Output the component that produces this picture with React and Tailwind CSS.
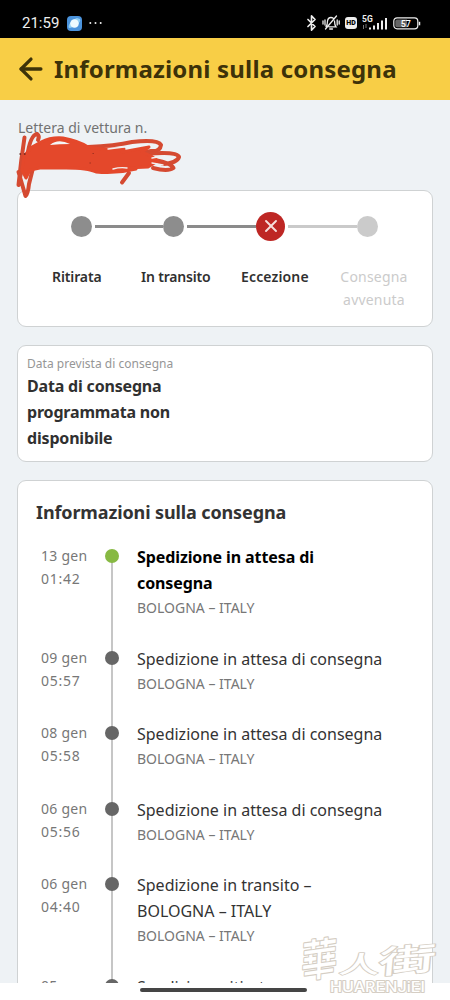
import { ArrowLeft, Bluetooth, X } from "lucide-react";

const events = [
    { date: "13 gen", time: "01:42", title: ["Spedizione in attesa di", "consegna"], place: "BOLOGNA – ITALY", current: true },
    { date: "09 gen", time: "05:57", title: ["Spedizione in attesa di consegna"], place: "BOLOGNA – ITALY" },
    { date: "08 gen", time: "05:58", title: ["Spedizione in attesa di consegna"], place: "BOLOGNA – ITALY" },
    { date: "06 gen", time: "05:56", title: ["Spedizione in attesa di consegna"], place: "BOLOGNA – ITALY" },
    { date: "06 gen", time: "04:40", title: ["Spedizione in transito –", "BOLOGNA – ITALY"], place: "BOLOGNA – ITALY" },
    { date: "05 gen", title: ["Spedizione ritirata"] },
];

function StatusBar() {
    return (
        <div className="flex h-[38px] shrink-0 items-center bg-black pt-[8px] pl-[22px] pr-[29px] text-[#eeeeee]">
            <span className="w-[38px] font-['Roboto',sans-serif] text-[15px] leading-none">21:59</span>
            <svg className="ml-[7px] size-[15px]" viewBox="0 0 15 15">
                <rect width="15" height="15" rx="4" fill="#4b93dc" />
                <path d="M2 12 C0 10 5 3 10 2 L13 3 C15 6 7 12 2 12Z" fill="#91cff5" />
                <circle cx="7.5" cy="7.5" r="4.3" fill="#eefaff" />
            </svg>
            <svg className="ml-[7px] h-[4px] w-[13px]" viewBox="0 0 13 4" fill="#eee">
                <circle cx="1.3" cy="2" r="1" />
                <circle cx="6.5" cy="2" r="1" />
                <circle cx="11.7" cy="2" r="1" />
            </svg>
            <div className="ml-auto flex items-center">
                <Bluetooth className="h-[18px] w-[17px]" strokeWidth={2.3} />
                <svg className="ml-[2px] h-[16px] w-[18px]" viewBox="0 0 18 16" fill="none" stroke="#eee" strokeWidth="1.3" strokeLinecap="round">
                    <path d="M4 11.5 Q5.5 10 5.5 6 Q6 2.5 9 2.5 Q10.3 2.5 11.3 3.3 M12.5 6 Q12.5 10 14 11.8 H7 M7.7 14 H10.5 M14.5 1 L3.5 14 M1 6 V9 M3 5 V10 M15.2 5 V10 M17.2 6 V9" />
                </svg>
                <span className="ml-[5px] flex h-[12px] w-[12px] items-center justify-center rounded-[3px] bg-[#eeeeee] font-['Roboto',sans-serif] text-[7px] font-black leading-none text-black">HD</span>
                <svg className="ml-[5px] h-[16px] w-[26px]" viewBox="0 0 26 16" fill="#eee">
                    <text x="0" y="7" fontSize="8.5" fontFamily="Roboto, sans-serif" fontWeight="700">5G</text>
                    <path d="M1.5 10 V14 M4 9 V13" stroke="#777" strokeWidth="1" />
                    <path d="M7 12.5h2v2H7z M11 10.5h2v4h-2z M15 8h2v6.5h-2z M19 5.5h2v9h-2z M23 3h2v11.5h-2z" />
                </svg>
                <svg className="ml-[5px] h-[13px] w-[28px]" viewBox="0 0 28 13">
                    <rect x=".8" y=".8" width="24" height="11" rx="3.3" fill="none" stroke="#eee" strokeWidth="1.2" />
                    <path d="M4 2.5h10v7.8H4q-1.7 0-1.7-2V4.5q0-2 1.7-2" fill="#666" />
                    <path d="M26.5 4.8v3.5" stroke="#eee" strokeWidth="1.5" />
                    <text x="12.8" y="9.7" textAnchor="middle" fill="#fff" fontSize="9" fontFamily="Roboto, sans-serif" fontWeight="500">57</text>
                </svg>
            </div>
        </div>
    );
}

// marker strokes covering the waybill number
function Scribble() {
    return (
        <svg className="absolute left-[14px] top-[129px] h-[72px] w-[172px]" viewBox="14 129 172 72" fill="none" stroke="#d54a31" strokeWidth="4" strokeLinecap="round" strokeLinejoin="round">
            <path d="M24.5 137.5 Q21 160 18.5 185 L22 168 M18.5 172 L25.5 196 Q28 194 29 184 L35 160" />
            <path d="M27 158 Q30 135 37 134 Q40 136 38 140" />
            <path d="M88 147 Q115 146 132 142 Q158 139 161 145 Q160 152 151 151 Q140 153 126 156" />
            <path d="M145 154 Q177 151 179 157 Q177 163 163 164 L150 158 M148 159 Q170 162 173.5 168 Q168 172 153 168 M129 173 L122 182.5" />
            <path d="M24 156 L32 147 L41 142 Q51 137 63 138 Q79 141 88 147 L102 149 L124 149 L122 152 L149 147 L142 152 L151 156 L158 161 L148 167 L126 168 L114 169 L136 169 Q116 174 96 172 Q88 168 66 168 L40 168 L30 170 L26 178 L22 170 Z" fill="#e4482b" stroke="#e4482b" strokeWidth="3" />
            <path d="M50 145 Q58 138 70 144 Q59 144 50 145Z" fill="#f4f5f6" stroke="none" />
            <path d="M113 169 Q120 167 127 168 M152 158 L163 156 M152 163 L163 165 M108 149 L124 147" stroke="#f3eeee" strokeWidth="1.4" />
            <path d="M20 154h.5 M24.5 154h.5" stroke="#5b2019" strokeWidth="1.4" />
            <path d="M93 153.5h.3 M90 163h.3" stroke="#8a2a1c" strokeWidth="1" />
        </svg>
    );
}

function Progress() {
    return (
        <section className="h-[137px] shrink-0 rounded-[9px] border border-[#cfd2d3] bg-white">
            <div className="flex h-[70px] items-center pl-[53px]">
                <span className="size-[21px] rounded-full bg-[#8d8d8d]" />
                <span className="ml-[3px] h-[3px] w-[68px] bg-[#8b8b8b]" />
                <span className="size-[21px] rounded-full bg-[#8d8d8d]" />
                <span className="ml-[3px] h-[3px] w-[69px] bg-[#8b8b8b]" />
                <span className="flex size-[29px] items-center justify-center rounded-full bg-[#be2724]">
                    <X className="size-[20px] text-[#f6dedc]" strokeWidth={2.3} />
                </span>
                <span className="ml-[3px] h-[3px] w-[69px] bg-[#cacaca]" />
                <span className="size-[21px] rounded-full bg-[#cbcbcb]" />
            </div>
            <div className="flex pt-[4px] text-[14px] font-semibold leading-[23px] text-[#303030]">
                <span className="ml-[34px] w-[89px] whitespace-nowrap tracking-[-0.12px]">Ritirata</span>
                <span className="w-[100px] whitespace-nowrap tracking-[-0.18px]">In transito</span>
                <span className="w-[90px] whitespace-nowrap tracking-[0.15px]">Eccezione</span>
                <span className="w-[86px] text-center font-normal tracking-[0.2px] text-[#cbcbcb]">Consegna avvenuta</span>
            </div>
        </section>
    );
}

function TimelineEvent({ event }) {
    return (
        <li className="relative flex pb-[25px]">
            <div className="w-[70px] shrink-0 pl-[23px] text-[14px] leading-[23px] tracking-[0.25px] text-[#777777]">
                <p className="whitespace-nowrap">{event.date}</p>
                {event.time && <p className="whitespace-nowrap tracking-[0.75px]">{event.time}</p>}
            </div>
            <span className="absolute bottom-[-13px] left-[93px] top-[13px] w-[2px] bg-[#c6c6c6]" />
            <span className={`absolute left-[87px] top-[5px] size-[14px] rounded-full ${event.current ? "bg-[#87b943]" : "bg-[#666666]"}`} />
            <div className="ml-[49px]">
                <div className={`whitespace-nowrap text-[16px] leading-[26px] ${event.current ? "font-bold tracking-[-0.1px] text-black" : "text-[#333333]"}`}>
                    {event.title.map((line) => (
                        <p key={line}>{line}</p>
                    ))}
                </div>
                {event.place && <p className="whitespace-nowrap text-[14px] leading-[24.5px] text-[#777777]">{event.place}</p>}
            </div>
        </li>
    );
}

function Watermark() {
    return (
        <svg className="absolute left-[290px] top-[924px] h-[74px] w-[160px]" viewBox="-6 -4 160 74" fill="#fff" stroke="#d5cec4" strokeWidth="2" strokeLinejoin="round" paintOrder="stroke">
            <g fontFamily="'Noto Sans CJK TC', sans-serif" fontWeight="500">
                <text fontSize="36" transform="translate(5 50) rotate(-8) skewX(-10) scale(1 1.2)">華</text>
                <text fontSize="34" transform="translate(42 45) skewX(-10) scale(1.2 .7)">人</text>
                <text fontSize="36" transform="translate(82 46) rotate(-5) skewX(-10) scale(1.6 .87)">街</text>
            </g>
            <text x="34" y="63.5" fontFamily="Inter, sans-serif" fontSize="14" fontWeight="500" textLength="95" lengthAdjust="spacingAndGlyphs">HUARENJiEI</text>
        </svg>
    );
}

export default function App() {
    return (
        <div className="relative flex h-[1000px] w-[450px] flex-col overflow-hidden bg-white font-['Noto_Sans',sans-serif]">
            <StatusBar />
            <header className="flex h-[62px] shrink-0 items-center bg-[#f8ce46] pl-[14px] text-[#3d3209]">
                <ArrowLeft className="size-[34px]" strokeWidth={2.3} />
                <h1 className="ml-[6px] whitespace-nowrap text-[24px] font-bold tracking-[0.18px]">Informazioni sulla consegna</h1>
            </header>
            <main className="flex h-[883px] shrink-0 flex-col overflow-hidden bg-[#eef2f5] px-[17px]">
                <p className="h-[90px] shrink-0 pl-[1px] pt-[17px] text-[14px] leading-[22px] text-[#727272]">Lettera di vettura n.</p>
                <Progress />
                <section className="mt-[18px] h-[117px] shrink-0 rounded-[9px] border border-[#cfd2d3] bg-white px-[9px] pt-[8px]">
                    <p className="text-[12px] leading-[19px] tracking-[0.03px] text-[#969696]">Data prevista di consegna</p>
                    <p className="w-[170px] text-[16px] font-bold leading-[26px] tracking-[-0.18px] text-[#303030]">Data di consegna programmata non disponibile</p>
                </section>
                <section className="mt-[18px] h-[600px] shrink-0 rounded-t-[9px] border border-[#cfd2d3] bg-white">
                    <h2 className="pl-[18px] pt-[17px] text-[18px] font-bold leading-[28px] tracking-[-0.12px] text-[#333333]">Informazioni sulla consegna</h2>
                    <ol className="pt-[18px]">
                        {events.map((event) => (
                            <TimelineEvent key={event.date + event.time} event={event} />
                        ))}
                    </ol>
                </section>
            </main>
            <div className="absolute left-[140px] top-[988px] h-[4px] w-[167px] rounded-full bg-[#454545]" />
            <Scribble />
            <Watermark />
        </div>
    );
}
